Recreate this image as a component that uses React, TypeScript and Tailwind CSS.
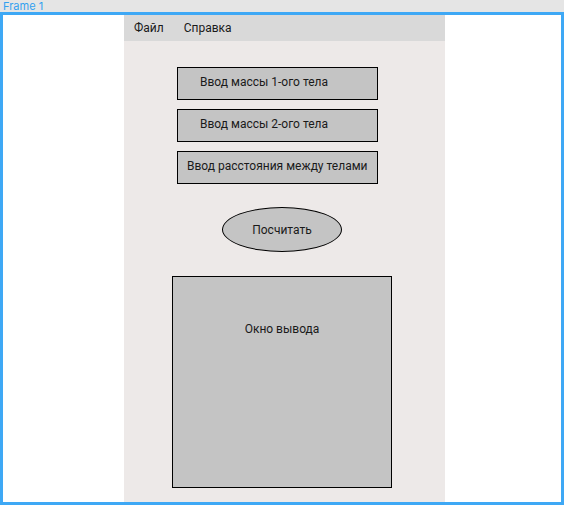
import React from "react";

export default function App() {
  const font = { fontFamily: "Roboto, 'Noto Sans', sans-serif" };
  return (
    <div className="w-[564px] h-[505px] flex flex-col bg-[#e5e5e5] overflow-hidden" style={font}>
      <div className="h-[12px] flex items-center pl-[3px] text-[11px] leading-none text-[#33a1f0]" style={{ fontFamily: "Inter, sans-serif" }}>
        Frame 1
      </div>
      <div className="flex-1 border-[3px] border-[#3ea8f5] bg-white flex">
        <div className="ml-[121px] w-[321px] bg-[#ede9e8] flex flex-col">
          <div className="h-[26px] bg-[#d9d9d9] flex items-center text-[12px] text-[#1a1a1a] pl-[10px] gap-[20px]">
            <span>Файл</span>
            <span>Справка</span>
          </div>
          <div className="flex flex-col">
            <div className="ml-[53px] mt-[26px] w-[201px] h-[33px] border border-black bg-[#c4c4c4] flex items-center pl-[22px] pb-[3px] text-[12px] text-[#1a1a1a]">
              Ввод массы 1-ого тела
            </div>
            <div className="ml-[53px] mt-[9px] w-[201px] h-[33px] border border-black bg-[#c4c4c4] flex items-center pl-[22px] pb-[3px] text-[12px] text-[#1a1a1a]">
              Ввод массы 2-ого тела
            </div>
            <div className="ml-[53px] mt-[9px] w-[201px] h-[33px] border border-black bg-[#c4c4c4] flex items-center pl-[9px] pb-[3px] text-[12px] text-[#1a1a1a] whitespace-nowrap">
              Ввод расстояния между телами
            </div>
            <div className="ml-[98px] mt-[23px] w-[120px] h-[45px] rounded-[50%] border border-black bg-[#c4c4c4] flex items-center justify-center pt-[1px] text-[12px] text-[#1a1a1a]">
              Посчитать
            </div>
            <div className="ml-[48px] mt-[24px] w-[220px] h-[212px] border border-black bg-[#c4c4c4] flex justify-center pt-[43px] text-[12px] text-[#1a1a1a]">
              Окно вывода
            </div>
          </div>
        </div>
      </div>
    </div>
  );
}
